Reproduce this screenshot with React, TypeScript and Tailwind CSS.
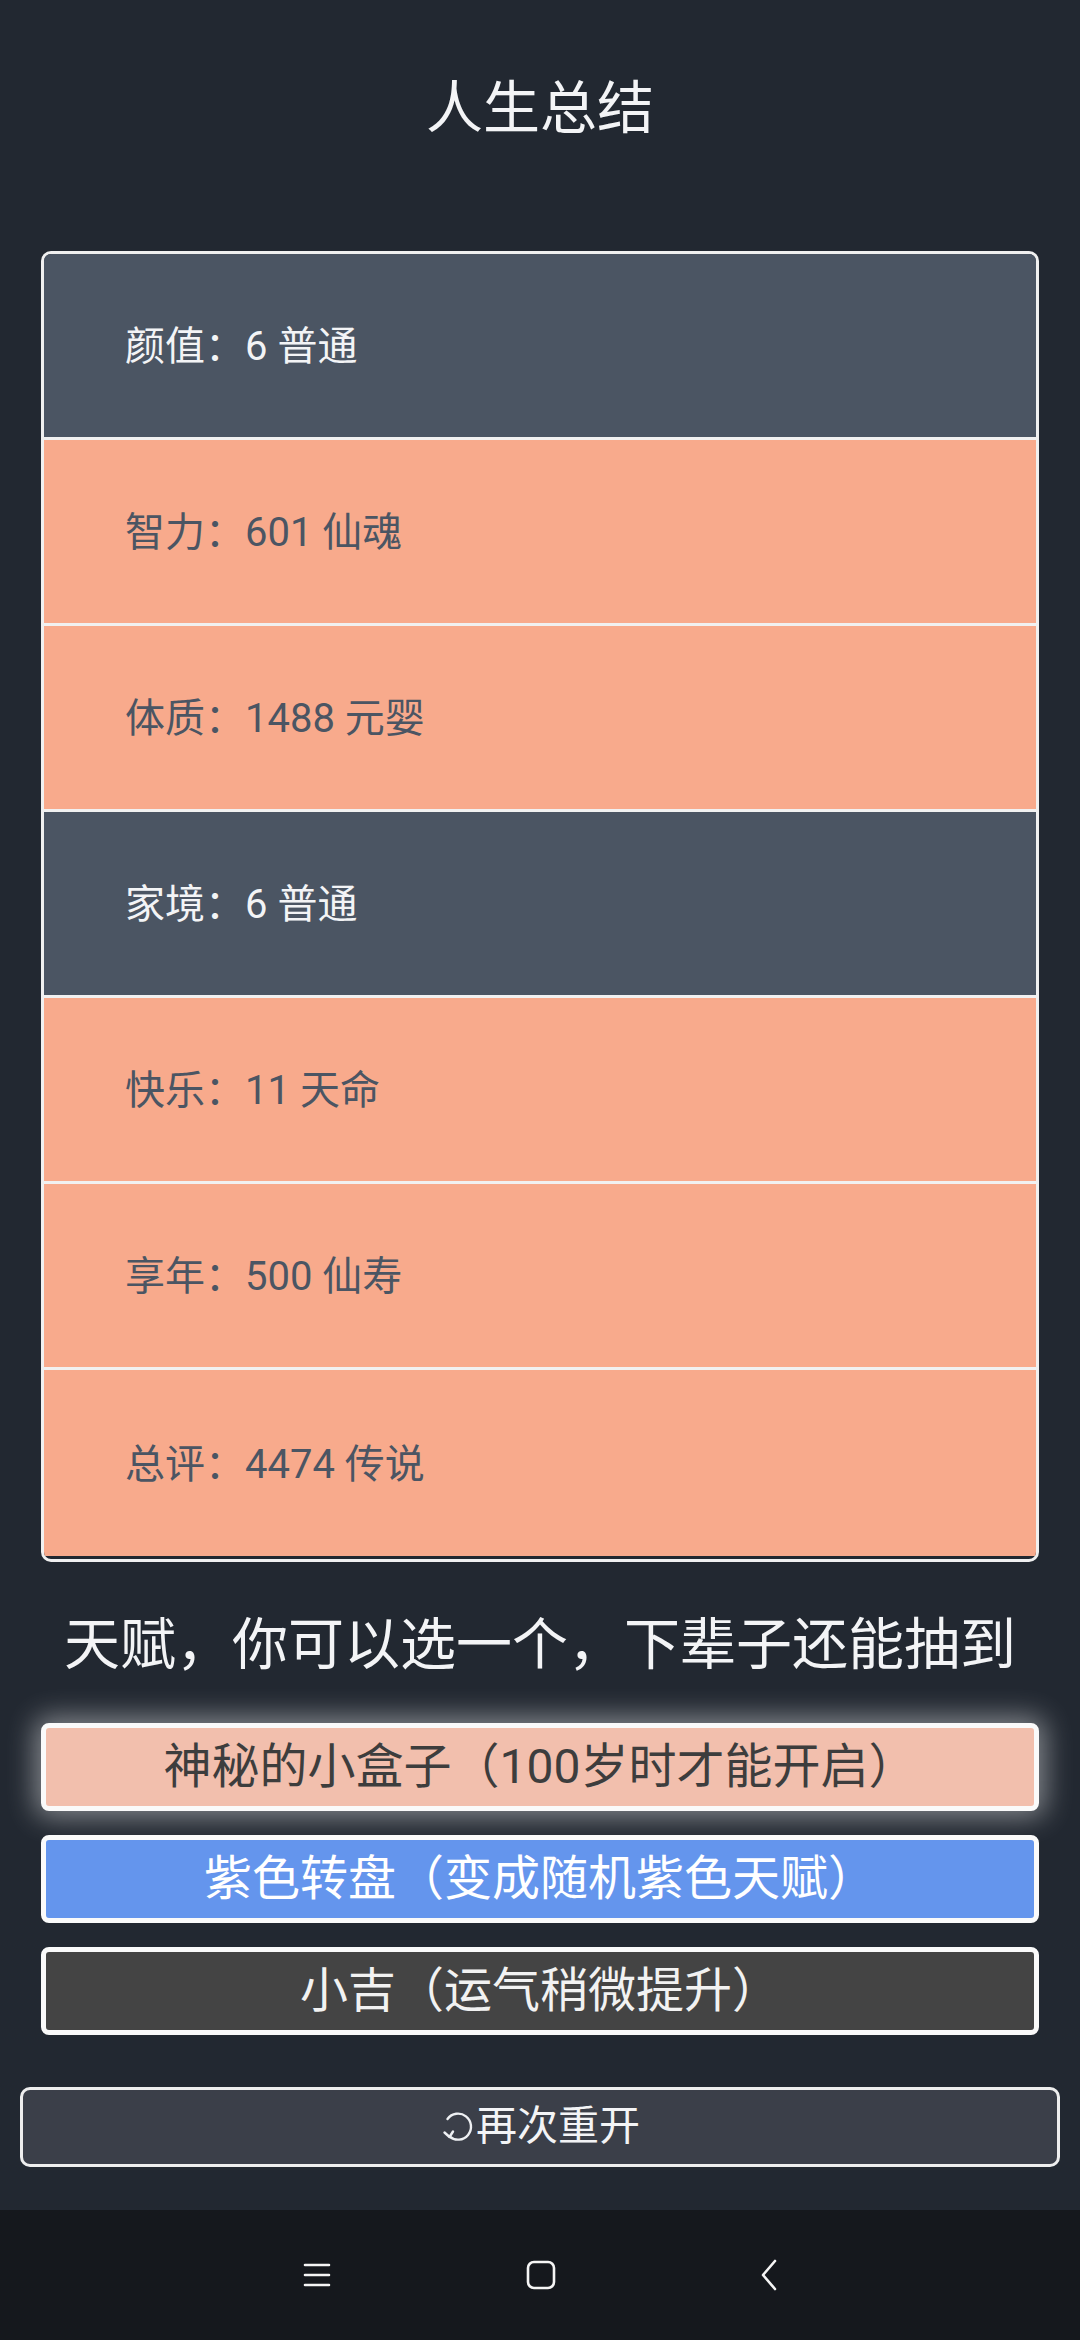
import React from 'react'

const stats = [
  { label: '颜值', value: '6 普通', tone: 'plain' },
  { label: '智力', value: '601 仙魂', tone: 'gold' },
  { label: '体质', value: '1488 元婴', tone: 'gold' },
  { label: '家境', value: '6 普通', tone: 'plain' },
  { label: '快乐', value: '11 天命', tone: 'gold' },
  { label: '享年', value: '500 仙寿', tone: 'gold' },
  { label: '总评', value: '4474 传说', tone: 'gold' },
]

const talents = [
  { text: '神秘的小盒子（100岁时才能开启）', cls: 'bg-[#f2bfad] text-[#3d3d3d] shadow-[0_0_28px_6px_rgba(255,255,255,0.45)]' },
  { text: '紫色转盘（变成随机紫色天赋）', cls: 'bg-[#6495ed] text-white' },
  { text: '小吉（运气稍微提升）', cls: 'bg-[#444444] text-[#f2f2f2]' },
]

const RestartIcon = () => (
  <svg width="36" height="36" viewBox="0 0 36 36" fill="none" stroke="#eef0f3" strokeWidth="2.4" strokeLinecap="round" strokeLinejoin="round">
    <path d="M9.5 27.5 A13 13 0 1 0 7.5 10" />
    <path d="M4.5 23.5 L9.5 28 L13 22.5" />
  </svg>
)

export default function App() {
  return (
    <div className="w-[1080px] h-[2340px] flex flex-col bg-[#222831] font-['Roboto','Noto_Sans_CJK_SC',sans-serif]">
      <div className="flex-1 flex flex-col">
        <h1 className="pt-[74px] text-center text-[57px] leading-[70px] font-normal text-[#f3f4f6]">人生总结</h1>

        {/* summary list */}
        <div className="mt-[107px] mx-[41px] rounded-[10px] border-[3px] border-[#f0f0f0] overflow-hidden pb-[3px] bg-[#222831]">
          {stats.map(({ label, value, tone }, i) => (
            <div
              key={label}
              className={
                'h-[186px] flex items-center pl-[81px] pt-[3px] text-[40px] ' +
                (i < stats.length - 1 ? 'border-b-[3px] border-[#f1f1f1] ' : '') +
                (tone === 'plain' ? 'bg-[#4b5563] text-[#f3f4f6]' : 'bg-[#f8aa8c] text-[#4b5563]')
              }
            >
              {label}：{value}
            </div>
          ))}
        </div>

        <h2 className="mt-[48px] text-center text-[56px] leading-[70px] font-normal text-[#f3f4f6]">
          天赋，你可以选一个，下辈子还能抽到
        </h2>

        <div className="mt-[43px] mx-[41px] flex flex-col gap-[24px]">
          {talents.map(({ text, cls }) => (
            <div
              key={text}
              className={'h-[88px] rounded-[8px] border-[5px] border-[#fafafa] flex items-center justify-center text-[48px] ' + cls}
            >
              {text}
            </div>
          ))}
        </div>

        <button className="mt-[52px] mx-[20px] h-[80px] rounded-[10px] border-[3px] border-[#eeeeee] bg-[#3b3f49] flex items-center justify-center text-[41px] text-[#f3f4f6]">
          <RestartIcon />
          <span>再次重开</span>
        </button>
      </div>

      {/* system navigation bar */}
      <div className="h-[130px] bg-[#15181d] flex items-center">
        <div className="flex items-center w-full">
          <div className="w-[331px] flex justify-end">
            <svg width="28" height="26" viewBox="0 0 28 26" stroke="#f5f5f5" strokeWidth="2.6" strokeLinecap="round">
              <path d="M2 3 H26 M2 13 H26 M2 23 H26" />
            </svg>
          </div>
          <div className="flex-1 flex justify-center">
            <svg width="30" height="30" viewBox="0 0 30 30" fill="none" stroke="#f5f5f5" strokeWidth="2.6">
              <rect x="2" y="2" width="26" height="26" rx="6" />
            </svg>
          </div>
          <div className="w-[329px] pl-[9px] flex justify-start">
            <svg width="18" height="32" viewBox="0 0 18 32" fill="none" stroke="#f5f5f5" strokeWidth="2.6" strokeLinecap="round" strokeLinejoin="round">
              <path d="M15 2 L3 16 L15 30" />
            </svg>
          </div>
        </div>
      </div>
    </div>
  )
}
